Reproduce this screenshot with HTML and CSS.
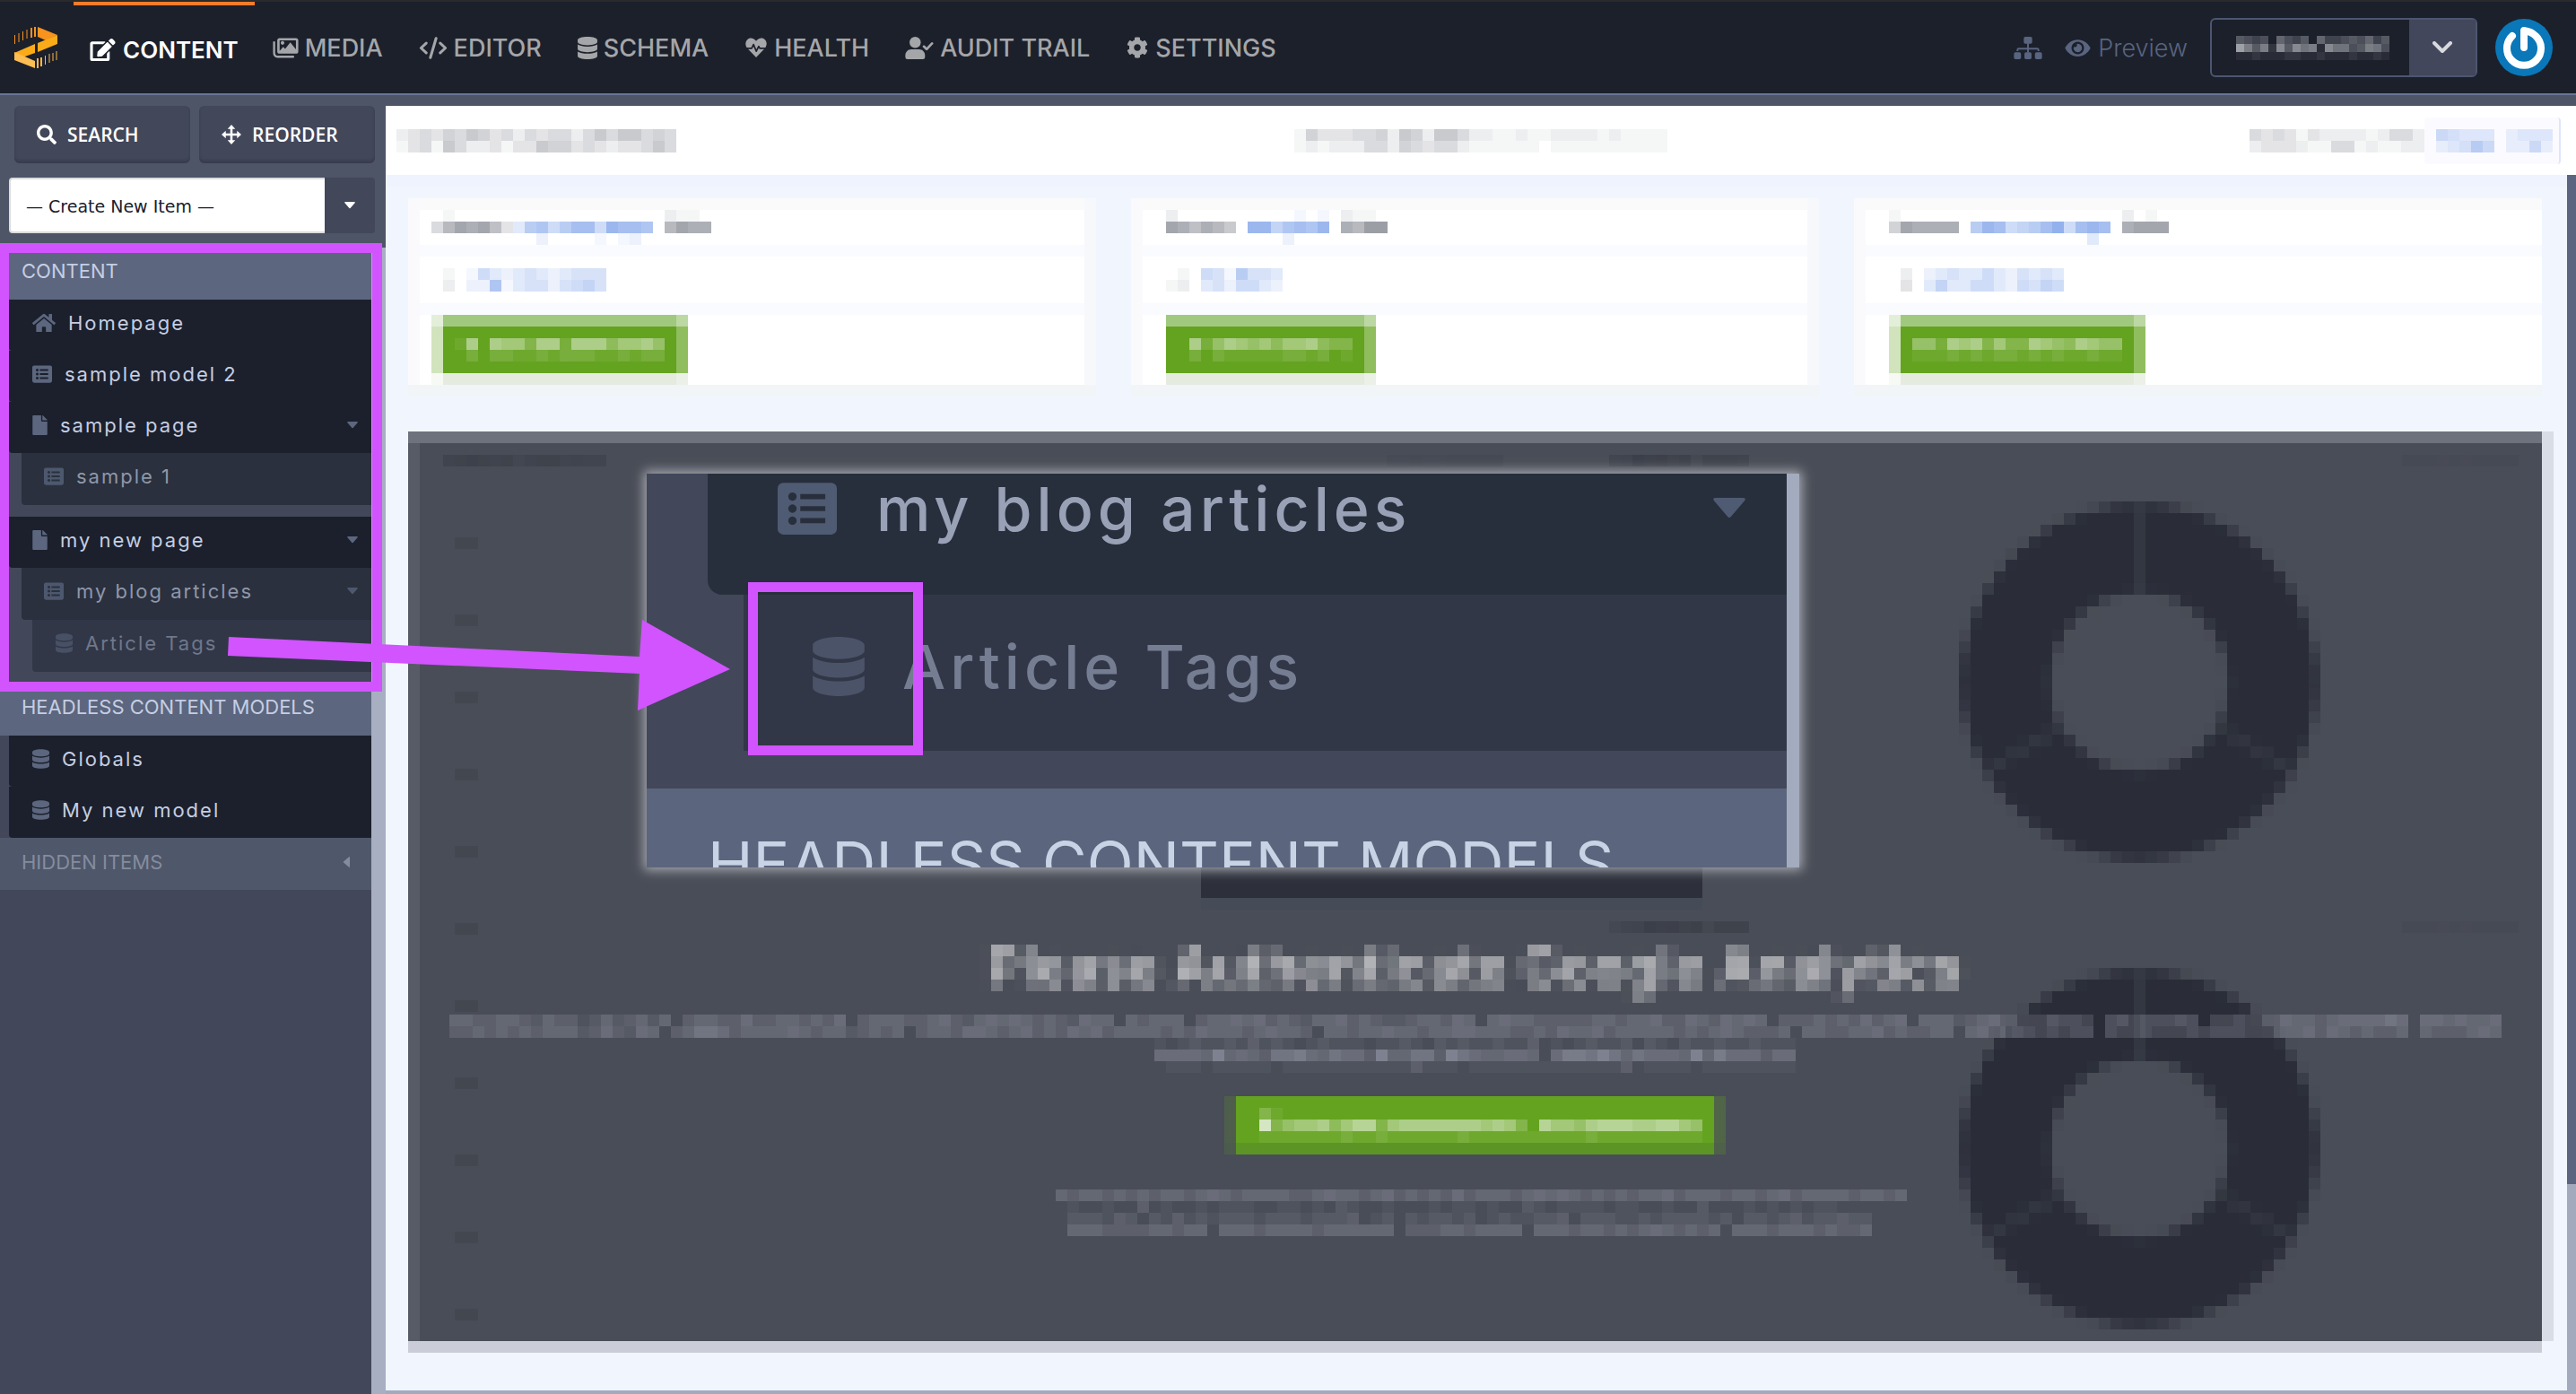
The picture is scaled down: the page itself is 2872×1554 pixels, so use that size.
FILE: index.html
```html
<!DOCTYPE html>
<html lang="en">
<head>
<meta charset="utf-8">
<title>Content</title>
<link rel="stylesheet" href="styles.css">
</head>
<body>
<svg class="defs" aria-hidden="true">
  <defs>
    <filter id="pixelate" x="0" y="0" width="100%" height="100%" color-interpolation-filters="sRGB">
      <feGaussianBlur in="SourceGraphic" stdDeviation="3" result="soft"/>
      <feFlood x="6" y="6" width="1" height="1"/>
      <feComposite width="13" height="13"/>
      <feTile result="dots"/>
      <feComposite in="soft" in2="dots" operator="in"/>
      <feMorphology operator="dilate" radius="6"/>
    </filter>
    <symbol id="i-edit" viewBox="0 0 576 512"><path d="M402.6 83.2l90.2 90.2c3.8 3.8 3.8 10 0 13.8L274.4 405.6l-92.8 10.3c-12.4 1.4-22.9-9.1-21.5-21.5l10.3-92.8L388.8 83.2c3.8-3.8 10-3.8 13.8 0zm162-22.9l-48.8-48.8c-15.2-15.2-39.9-15.2-55.2 0l-35.4 35.4c-3.8 3.8-3.8 10 0 13.8l90.2 90.2c3.8 3.8 10 3.8 13.8 0l35.4-35.4c15.2-15.3 15.2-40 0-55.2zM384 346.2V448H64V128h229.8c3.2 0 6.2-1.3 8.5-3.5l40-40c7.6-7.6 2.2-20.5-8.5-20.5H48C21.5 64 0 85.5 0 112v352c0 26.5 21.5 48 48 48h352c26.5 0 48-21.5 48-48V306.2c0-10.7-12.9-16-20.5-8.5l-40 40c-2.2 2.3-3.5 5.3-3.5 8.5z"/></symbol>
    <symbol id="i-media" viewBox="0 0 576 512"><path fill-rule="evenodd" d="M150 32h372a54 54 0 0 1 54 54v246a54 54 0 0 1-54 54H150a54 54 0 0 1-54-54V86a54 54 0 0 1 54-54zm0 48v240l82-92 44 48 118-150 128 160V80H150zm66 18a42 42 0 1 0 .1 0z"/><path d="M24 100a24 24 0 0 1 24 24v244a64 64 0 0 0 64 64h348a24 24 0 0 1 0 48H100A100 100 0 0 1 0 380V124a24 24 0 0 1 24-24z"/></symbol>
    <symbol id="i-code" viewBox="0 0 640 512"><path fill="none" stroke="currentColor" stroke-width="62" stroke-linecap="round" stroke-linejoin="round" d="M160 145L42 256l118 111M480 145l118 111-118 111M385 35L255 477"/></symbol>
    <symbol id="i-db" viewBox="0 0 448 512"><path d="M448 73.143v45.714C448 159.143 347.667 192 224 192S0 159.143 0 118.857V73.143C0 32.857 100.333 0 224 0s224 32.857 224 73.143zM448 176v102.857C448 319.143 347.667 352 224 352S0 319.143 0 278.857V176c48.125 33.143 136.208 48.572 224 48.572S399.874 209.143 448 176zm0 160v102.857C448 479.143 347.667 512 224 512S0 479.143 0 438.857V336c48.125 33.143 136.208 48.572 224 48.572S399.874 369.143 448 336z"/></symbol>
    <symbol id="i-heart" viewBox="0 0 512 512"><path d="M256 488L60 286C-10 212-8 112 52 62c60-50 140-36 190 24l14 16 14-16c50-60 130-74 190-24 60 50 62 150-8 224z"/><path fill="none" stroke="#1c202b" stroke-width="36" stroke-linejoin="round" d="M10 276h140l44-92 66 160 58-116 26 48h160"/></symbol>
    <symbol id="i-user" viewBox="0 0 640 512"><circle cx="224" cy="128" r="128"/><path d="M134 288h180c74 0 134 60 134 134v42a48 48 0 0 1-48 48H48a48 48 0 0 1-48-48v-42c0-74 60-134 134-134z"/><path fill="none" stroke="currentColor" stroke-width="56" stroke-linecap="round" stroke-linejoin="round" d="M424 222l62 62 124-132"/></symbol>
    <symbol id="i-cog" viewBox="0 0 512 512"><path d="M487.4 315.7l-42.6-24.6c4.3-23.2 4.3-47 0-70.2l42.6-24.6c4.9-2.8 7.1-8.6 5.5-14-11.1-35.6-30-67.8-54.7-94.6-3.8-4.1-10-5.1-14.8-2.3L380.8 110c-17.9-15.4-38.5-27.3-60.8-35.1V25.8c0-5.6-3.9-10.5-9.4-11.7-36.7-8.2-74.3-7.8-109.2 0-5.5 1.2-9.4 6.1-9.4 11.7V75c-22.2 7.9-42.8 19.8-60.8 35.1L88.7 85.5c-4.9-2.8-11-1.9-14.8 2.3-24.7 26.7-43.6 58.9-54.7 94.6-1.7 5.4.6 11.2 5.5 14L67.3 221c-4.3 23.2-4.3 47 0 70.2l-42.6 24.6c-4.9 2.8-7.1 8.6-5.5 14 11.1 35.6 30 67.8 54.7 94.6 3.8 4.1 10 5.1 14.8 2.3l42.6-24.6c17.9 15.4 38.5 27.3 60.8 35.1v49.2c0 5.6 3.9 10.5 9.4 11.7 36.7 8.2 74.3 7.8 109.2 0 5.5-1.2 9.4-6.1 9.4-11.7v-49.2c22.2-7.9 42.8-19.8 60.8-35.1l42.6 24.6c4.9 2.8 11 1.9 14.8-2.3 24.7-26.7 43.6-58.9 54.7-94.6 1.5-5.5-.7-11.3-5.6-14.1zM256 336c-44.1 0-80-35.9-80-80s35.9-80 80-80 80 35.9 80 80-35.9 80-80 80z"/></symbol>
    <symbol id="i-sitemap" viewBox="0 0 640 512"><rect x="224" y="0" width="192" height="160" rx="36"/><rect x="0" y="352" width="160" height="160" rx="36"/><rect x="240" y="352" width="160" height="160" rx="36"/><rect x="480" y="352" width="160" height="160" rx="36"/><path fill="none" stroke="currentColor" stroke-width="40" d="M320 150v210M80 330v-30q0-28 28-28h424q28 0 28 28v30"/></symbol>
    <symbol id="i-eye" viewBox="0 0 576 512"><path fill-rule="evenodd" d="M288 64c130 0 228 80 284 178q6 14 0 28c-56 98-154 178-284 178S60 368 4 270q-6-14 0-28C60 144 158 64 288 64zm0 48a144 144 0 1 0 .1 0z"/><path d="M288 160a96 96 0 1 1-92 70c50 22 92-20 70-66q10-4 22-4z"/></symbol>
    <symbol id="i-search" viewBox="0 0 512 512"><path d="M505 442.7L405.3 343c-4.5-4.5-10.6-7-17-7H372c27.6-35.3 44-79.7 44-128C416 93.1 322.9 0 208 0S0 93.1 0 208s93.1 208 208 208c48.3 0 92.7-16.4 128-44v16.3c0 6.4 2.5 12.5 7 17l99.7 99.7c9.4 9.4 24.6 9.4 33.9 0l28.3-28.3c9.4-9.4 9.4-24.6.1-34zM208 336c-70.7 0-128-57.2-128-128 0-70.7 57.2-128 128-128 70.7 0 128 57.2 128 128 0 70.7-57.2 128-128 128z"/></symbol>
    <symbol id="i-move" viewBox="0 0 512 512"><path d="M256 0l100 110h-70v116h116v-70l110 100-110 100v-70H286v116h70L256 512 156 402h70V286H110v70L0 256l110-100v70h116V110h-70z"/></symbol>
    <symbol id="i-home" viewBox="0 0 576 512"><path d="M280.37 148.26L96 300.11V464a16 16 0 0 0 16 16l112.06-.29a16 16 0 0 0 15.92-16V368a16 16 0 0 1 16-16h64a16 16 0 0 1 16 16v95.64a16 16 0 0 0 16 16.05L464 480a16 16 0 0 0 16-16V300L295.67 148.26a12.19 12.19 0 0 0-15.3 0zM571.6 251.47L488 182.56V44.05a12 12 0 0 0-12-12h-56a12 12 0 0 0-12 12v72.61L318.47 43a48 48 0 0 0-61 0L4.34 251.47a12 12 0 0 0-1.6 16.9l25.5 31A12 12 0 0 0 45.15 301l235.22-193.74a12.19 12.19 0 0 1 15.3 0L530.9 301a12 12 0 0 0 16.9-1.6l25.5-31a12 12 0 0 0-1.7-16.93z"/></symbol>
    <symbol id="i-list" viewBox="0 0 512 512"><path fill-rule="evenodd" d="M48 32h416a48 48 0 0 1 48 48v352a48 48 0 0 1-48 48H48a48 48 0 0 1-48-48V80a48 48 0 0 1 48-48zm80 84a36 36 0 1 0 .1 0zm0 104a36 36 0 1 0 .1 0zm0 104a36 36 0 1 0 .1 0zM196 130v44h216v-44zm0 104v44h216v-44zm0 104v44h216v-44z"/></symbol>
    <symbol id="i-file" viewBox="0 0 384 512"><path d="M24 0h200v136a24 24 0 0 0 24 24h136v328a24 24 0 0 1-24 24H24a24 24 0 0 1-24-24V24A24 24 0 0 1 24 0zM256 0q10 0 17 7l104 104q7 7 7 17H256z"/></symbol>
    <symbol id="i-down" viewBox="0 0 12 8"><path d="M1 0h10q1.500 0 .6 1.200L6.600 7q-.6.700-1.200 0L.4 1.200Q-.5 0 1 0z"/></symbol>
    <symbol id="i-left" viewBox="0 0 8 12"><path d="M8 1v10q0 1.500-1.200.6L1 6.600q-.7-.6 0-1.200L6.800.4Q8-.5 8 1z"/></symbol>
    <symbol id="i-chevron" viewBox="0 0 22 14"><path fill="none" stroke="currentColor" stroke-width="4" stroke-linecap="round" stroke-linejoin="round" d="M2 2l9 9 9-9"/></symbol>
  </defs>
</svg>

<header class="topbar">
  <a class="brand" href="#" aria-label="Home">
    <svg viewBox="0 0 48 46">
      <path fill="#f7931e" d="M26 0l22 9-13 6-9-4z"/>
      <path fill="#fbab18" d="M48 9v10L26 28V18zM23 19v10L9 34 0 29z"/>
      <path fill="#fbbd54" d="M0 28l23 10v8L0 37z"/>
      <path stroke="#f7931e" d="M.5 9v10M5 7v10M9.500 5v10M14 3v10" stroke-width="1"/>
      <path stroke="#f7931e" stroke-width="2" d="M19 1v11M23 0v11"/>
      <path stroke="#fbb84a" stroke-width="2" d="M26 35v11M30 34v10"/>
      <path stroke="#fbb84a" stroke-width="1" d="M34.500 32v10M39 30v10M43 29v9M47 27v10"/>
    </svg>
  </a>
  <nav class="nav">
    <a class="nav-item is-active" href="#"><svg class="ic w29"><use href="#i-edit"/></svg>CONTENT</a>
    <a class="nav-item" href="#"><svg class="ic w29"><use href="#i-media"/></svg>MEDIA</a>
    <a class="nav-item" href="#"><svg class="ic w32"><use href="#i-code"/></svg>EDITOR</a>
    <a class="nav-item" href="#"><svg class="ic w22"><use href="#i-db"/></svg>SCHEMA</a>
    <a class="nav-item" href="#"><svg class="ic w26"><use href="#i-heart"/></svg>HEALTH</a>
    <a class="nav-item" href="#"><svg class="ic w32"><use href="#i-user"/></svg>AUDIT TRAIL</a>
    <a class="nav-item" href="#"><svg class="ic w26"><use href="#i-cog"/></svg>SETTINGS</a>
  </nav>
  <div class="tools">
    <a class="tool" href="#" aria-label="Site map"><svg class="ic w32"><use href="#i-sitemap"/></svg></a>
    <a class="tool" href="#"><svg class="ic w29"><use href="#i-eye"/></svg>Preview</a>
    <div class="site">
      <span class="mosaic" data-cell="9" data-rows="5434064350633454635|b858295978197745874|1121112211211121121"></span>
      <button class="site-more" type="button" aria-label="Switch site"><svg class="ic w22"><use href="#i-chevron"/></svg></button>
    </div>
    <a class="avatar" href="#" aria-label="Account">
      <svg viewBox="0 0 64 64"><circle cx="32" cy="32" r="32" fill="#0a77b9"/><path fill="none" stroke="#fff" stroke-width="8" stroke-linecap="round" stroke-linejoin="round" d="M19 19A19 19 0 1 0 45 19q-5-5-13-6v19"/></svg>
    </a>
  </div>
</header>

<div class="shell">
  <aside class="side">
    <div class="side-tools">
      <div class="side-actions">
        <button class="action" type="button"><svg class="ic w22"><use href="#i-search"/></svg>SEARCH</button>
        <button class="action" type="button"><svg class="ic w22"><use href="#i-move"/></svg>REORDER</button>
      </div>
      <label class="create">
        <select aria-label="Create New Item"><option>— Create New Item —</option></select>
        <span class="create-caret"><svg class="ic w12"><use href="#i-down"/></svg></span>
      </label>
    </div>
    <div class="tree">
      <h2 class="group">CONTENT</h2>
      <ul class="items">
        <li><a class="row" href="#"><svg class="ic w26"><use href="#i-home"/></svg>Homepage</a></li>
        <li><a class="row" href="#"><svg class="ic w22"><use href="#i-list"/></svg>sample model 2</a></li>
        <li><a class="row" href="#"><svg class="ic w17"><use href="#i-file"/></svg>sample page<svg class="ic w12 caret"><use href="#i-down"/></svg></a>
          <ul class="items nested">
            <li><a class="row row-2" href="#"><svg class="ic w22"><use href="#i-list"/></svg>sample 1</a></li>
          </ul>
        </li>
        <li><a class="row" href="#"><svg class="ic w17"><use href="#i-file"/></svg>my new page<svg class="ic w12 caret"><use href="#i-down"/></svg></a>
          <ul class="items nested">
            <li><a class="row row-2" href="#"><svg class="ic w22"><use href="#i-list"/></svg>my blog articles<svg class="ic w12 caret"><use href="#i-down"/></svg></a></li>
            <li><a class="row row-3" href="#"><svg class="ic w19"><use href="#i-db"/></svg>Article Tags</a></li>
          </ul>
        </li>
      </ul>
      <h2 class="group">HEADLESS CONTENT MODELS</h2>
      <ul class="items">
        <li><a class="row" href="#"><svg class="ic w19"><use href="#i-db"/></svg>Globals</a></li>
        <li><a class="row" href="#"><svg class="ic w19"><use href="#i-db"/></svg>My new model</a></li>
      </ul>
      <h2 class="group is-hidden">HIDDEN ITEMS<svg class="ic w8"><use href="#i-left"/></svg></h2>
    </div>
  </aside>

  <main class="main">
    <div class="subbar">
      <span class="mosaic ink" data-rows="234354653424344246466454|134164223133655343233464"></span>
      <span class="mosaic ink subbar-mid" data-rows="15333445265266422112112222121111|12122244254344211111101111111111"></span>
      <span class="subbar-end">
        <span class="mosaic ink" data-rows="434313222212442|233321144121122"></span>
        <span class="subbar-links"><span class="mosaic sky" data-rows="54333.2333|23475.2252"></span></span>
      </span>
    </div>

    <div class="page">
      <section class="cards">
        <article class="card">
          <div class="card-title"><span class="mosaic ink" data-rows=".1.....|48a9a73|......."></span><span class="mosaic sky" data-rows="............|37857995a998|..2....1.12."></span><span class="mosaic ink gap" data-rows="211.|8a99|...."></span></div>
          <div class="card-line"><span class="mosaic ink" data-rows="1.|2."></span><span class="mosaic sky" data-rows="153234323444|228134424564"></span></div>
          <button class="cta cta-l" type="button" aria-label="Open report 1"><span class="mosaic" data-rows="17.766377277746675|.2.221121222112122"></span></button>
        </article>
        <article class="card">
          <div class="card-title"><span class="mosaic ink" data-rows="2.....|a97986|......"></span><span class="mosaic sky gap" data-rows="....1.1|aa6898a|...2..."></span><span class="mosaic ink gap" data-rows="211.|98bb|...."></span></div>
          <div class="card-line"><span class="mosaic ink" data-rows=".1|12"></span><span class="mosaic sky gap" data-rows="5417443|3425532"></span></div>
          <button class="cta cta-m" type="button" aria-label="Open report 2"><span class="mosaic" data-rows="72576564667433|2.2111112212.1"></span></button>
        </article>
        <article class="card">
          <div class="card-title"><span class="mosaic ink" data-rows="1.....|5a9999|......"></span><span class="mosaic sky gap" data-rows="............|7a95679b59a9|..........3."></span><span class="mosaic ink gap" data-rows="2.1.|9aaa|...."></span></div>
          <div class="card-line"><span class="mosaic ink" data-rows=".2|.3"></span><span class="mosaic sky gap" data-rows="234335324343|363355325465"></span></div>
          <button class="cta cta-l" type="button" aria-label="Open report 3"><span class="mosaic" data-rows="552767363376547655|111212122121211211"></span></button>
        </article>
      </section>

      <section class="panel">
        <div class="charts" aria-hidden="true">
          <div class="ticks"><i></i><i></i><i></i><i></i><i></i><i></i><i></i><i></i><i></i><i></i><i></i></div>
          <div class="chart-head">
            <span class="mosaic shade" data-rows="78987857886766"></span>
            <span class="mosaic shade" data-rows="2232233333"></span>
          </div>
          <div class="chart">
            <div class="chart-head">
              <span class="mosaic shade" data-rows="67b9a8948887"></span>
              <span class="mosaic shade" data-rows="2221212222"></span>
            </div>
            <svg class="donut" viewBox="0 0 403 403"><circle cx="201" cy="201" r="149" fill="none" stroke="#2a2d38" stroke-width="98"/><path stroke="#343842" stroke-width="10" d="M201 2v98M113 252l-84 49M289 252l84 49"/></svg>
            <div class="chart-head chart-head-low">
              <span class="mosaic shade" data-rows="467b9a894888"></span>
              <span class="mosaic shade" data-rows="2221212222"></span>
            </div>
            <svg class="donut" viewBox="0 0 403 403"><circle cx="201" cy="201" r="149" fill="none" stroke="#2a2d38" stroke-width="98"/><path stroke="#343842" stroke-width="10" d="M201 2v98M113 252l-84 49M289 252l84 49"/></svg>
          </div>
        </div>
        <div class="notice">
          <div class="plate"></div>
          <h1>Please Authenticate Google Analytics</h1>
          <span class="mosaic lilac" data-rows="4433443243312423424.34433533443435.3444334532454543432544.43444.344545343244534322344354.454433333443445335435454.33343435345.444234533335443.45344454.33433354434555565.5545445|334343434442353254.34665344445434423434.3443554345343545344443435444345443.4434454434455444334354453444443434543334.4433445343344.45345434344.43343334344433344535434334.4333454"></span>
          <span class="mosaic lilac" data-rows="1.1211213121.12111.1121.212112113.1.12112.21.2112112111|555548454366754655384466386544554.577686465554847555355|.111.11111.111111111113111.11111111111113.1111.11111111"></span>
          <button class="cta cta-xl" type="button" aria-label="Continue"><span class="mosaic" data-rows="31....................................|b3566746883677777776763.86657888778865|11111112112111111211111111112111111111"></span></button>
          <span class="mosaic lilac" data-rows="..4344343434434543444433454434534343534443454543434344534443443453444434434.|...1..1..3.1..1.111..11.1.21..1...1.11.1..21.1111.11..1..2...1.1.1.11.|...222132.213121222122212223.12.212212.1211223.2221121222212.22123122322..|...444333344344.444344443444444.3334434444.4443443434543434.444344434334..."></span>
        </div>
        <figure class="zoom">
          <div class="z-row z-row-2"><svg class="ic w66"><use href="#i-list"/></svg>my blog articles<svg class="ic w38 z-caret"><use href="#i-down"/></svg></div>
          <div class="z-row z-row-3"><svg class="ic w58"><use href="#i-db"/></svg>Article Tags<span class="z-mark"></span></div>
          <div class="z-group">HEADLESS CONTENT MODELS</div>
        </figure>
      </section>
    </div>
  </main>
</div>
<div class="outline" aria-hidden="true"></div>
<svg class="arrow" viewBox="0 0 560 102" aria-hidden="true"><path fill="#d154ff" d="M1 19l458 22 3-41 98 55-103 46 2-41L0 40z"/></svg>
<script src="script.js"></script>
</body>
</html>
```
FILE: styles.css
```css
* { box-sizing: border-box; }
body { margin: 0; min-height: 100vh; display: flex; flex-direction: column; font-family: Inter, "Open Sans", sans-serif; background: #42475a; position: relative; }
a { color: inherit; text-decoration: none; }
button { font: inherit; border: 0; padding: 0; cursor: pointer; }
ul { list-style: none; margin: 0; padding: 0; }
.defs { position: absolute; width: 0; height: 0; }
.mosaic { display: block; flex: none; }
.mosaic svg { display: block; }

.ic { flex: none; display: block; fill: currentColor; }
.w8 { width: 8px; height: 12px; }
.w12 { width: 12px; height: 8px; }
.w17 { width: 17px; height: 22px; }
.w19 { width: 19px; height: 22px; }
.w22 { width: 22px; height: 22px; }
.w26 { width: 26px; height: 24px; }
.w29 { width: 29px; height: 25px; }
.w32 { width: 32px; height: 25px; }
.w38 { width: 38px; height: 24px; }
.w58 { width: 58px; height: 66px; }
.w66 { width: 66px; height: 66px; }

/* top bar */
.topbar { height: 106px; display: flex; background: #1c202b; border-top: 2px solid #2a2a2a; border-bottom: 2px solid #6a7595; padding: 0 26px 0 16px; }
.brand { display: flex; align-items: center; width: 66px; }
.brand svg { width: 48px; height: 46px; }
.nav { display: flex; }
.nav-item { display: flex; align-items: center; gap: 7px; padding: 0 20px; font-size: 27px; font-weight: 500; color: #a5a6a9; }
.nav .w22 { height: 25px; }
.nav-item.is-active { padding: 0 18px; gap: 8px; color: #fff; font-size: 26px; font-weight: 600; border-top: 4px solid #f47b2a; }
.tools { margin-left: auto; display: flex; align-items: center; gap: 25px; color: #59647f; font-size: 27px; font-weight: 300; }
.tool { display: flex; align-items: center; gap: 8px; }
.site { display: flex; align-items: center; justify-content: space-between; width: 298px; height: 66px; border: 2px solid #4d5670; border-radius: 6px; padding-left: 27px; color: #cfd0d6; }
.site-more { align-self: stretch; width: 74px; display: flex; align-items: center; justify-content: center; background: #42475b; color: #d8d9de; }
.site-more .ic { height: 14px; }
.avatar { margin-left: -5px; }
.avatar svg { display: block; width: 64px; height: 64px; }

.shell { flex: 1; display: flex; background: #4d5567; }

/* sidebar */
.side { width: 430px; flex: none; display: flex; flex-direction: column; }
.side-tools { height: 170px; padding: 12px 12px 0 10px; display: flex; flex-direction: column; gap: 16px; }
.side-actions { display: grid; grid-template-columns: 1fr 1fr; gap: 10px; padding-left: 6px; }
.action { height: 64px; display: flex; align-items: center; gap: 12px; padding-left: 25px; background: #42475a; color: #fff; border-radius: 6px; font-family: "Open Sans", sans-serif; font-size: 21px; font-weight: 600; box-shadow: inset 0 -3px 3px #383d4e; }
.create { display: flex; height: 62px; }
.create select { appearance: none; flex: 1; min-width: 0; border: 2px solid #dcdcdc; border-right: 0; border-radius: 4px 0 0 4px; background: #fff; color: #1b202c; font-family: "DejaVu Sans", sans-serif; font-size: 19px; padding: 2px 17px 0; }
.create-caret { width: 56px; display: flex; align-items: center; justify-content: center; background: #42475a; color: #fff; border-radius: 0 4px 4px 0; }
.tree { flex: 1; background: #42475a; border-right: 16px solid #a9afc2; }
.group { margin: 0; height: 58px; display: flex; align-items: center; justify-content: space-between; padding: 0 24px 6px; background: #5c667e; color: #c5cee3; font-size: 22px; font-weight: 400; }
.group.is-hidden { background: #4f576a; color: #848c9e; padding-bottom: 4px; }
.row { display: flex; align-items: center; gap: 14px; height: 57px; margin-left: 10px; padding: 0 15px 6px 26px; background: #1b202c; color: #c5cee3; font-size: 22px; letter-spacing: 2px; border-radius: 0 0 0 4px; }
.row .ic { color: #5c667e; }
.row .caret { margin-left: auto; }
.nested { padding-bottom: 13px; }
.row-2, .row-3 { height: 58px; }
.row-2 { margin-left: 24px; padding-left: 25px; background: #2a303d; color: #8e97ab; }
.row-2 .ic { color: #4d586e; }
.row-3 { margin-left: 36px; background: #313747; color: #6f778b; }
.row-3 .ic { color: #485065; }

/* main column */
.main { flex: 1; min-width: 0; margin-top: 12px; display: flex; flex-direction: column; background: #fff; border-bottom: 4px solid #a3aabd; }
.subbar { height: 77px; display: flex; align-items: center; justify-content: space-between; padding: 0 17px 0 12px; }
.subbar-mid { margin-left: 40px; }
.subbar-end { display: flex; align-items: center; }
.subbar-links { padding: 13px 7px 13px 13px; background: #fbfbff; border-right: 2px solid #dfe6fb; border-radius: 4px; }
.ink { color: #777a85; }
.sky { color: #6a94e6; }
.gap { margin-left: 13px; }

.page { flex: 1; display: flex; flex-direction: column; padding: 26px 38px 55px 25px; background: linear-gradient(#eff3fd 13px, #f1f6fe 13px); position: relative; }
/* scroll track with its thumb */
.page::after { content: ""; position: absolute; top: 0; right: 0; bottom: 0; width: 10px; background: linear-gradient(#5b6580 83%, #a3aabd 83%); }
.cards { display: grid; grid-template-columns: repeat(3, 1fr); gap: 39px; }
.card { background: linear-gradient(#fafafa 13px, #fff 13px 52px, #fafbff 52px 65px, #fff 65px 117px, #fafbff 117px 130px, #fff 130px); border-left: 13px solid #fafafc; border-right: 13px solid #f6f8fb; box-shadow: 0 13px #f1f5f8; padding: 13px 13px 0; }
.card + .card { padding-left: 26px; }
.card:last-child { border-right-width: 0; }
.card-title { display: flex; height: 65px; }
.card-line { display: flex; height: 52px; padding-left: 13px; }
.card + .card .card-line { padding-left: 0; }
.cta { display: block; height: 78px; padding: 26px; color: #fff; text-align: left; background: linear-gradient(to right, #ffffffb3 13px, #fff0 13px calc(100% - 13px), #ffffff48 calc(100% - 13px)), linear-gradient(#a1c87f 13px, #64a31f 13px 65px, #e5ebdf 65px); }
.cta-l { width: 286px; }
.cta-m { width: 234px; background: linear-gradient(to right, #fff0 calc(100% - 13px), #ffffff48 calc(100% - 13px)), linear-gradient(#a1c87f 13px, #64a31f 13px 65px, #e5ebdf 65px); }
.cta-xl { width: 559px; height: 65px; padding: 13px 39px; background: linear-gradient(to right, #494d57cc 13px, #494d5700 13px calc(100% - 13px), #494d57b8 calc(100% - 13px)), linear-gradient(#64a31f 52px, #5c9426 52px); }

.panel { flex: 1; min-height: 1014px; margin-top: 52px; position: relative; background: #494d57; box-shadow: inset 0 13px #6e727c, inset 13px 0 #575b66, 13px 0 #d9dde6, 0 13px #cacdd7; }
.charts { position: absolute; inset: 26px 26px 0 39px; display: grid; grid-template-columns: 1182fr 1014fr; column-gap: 118px; }
.ticks { position: absolute; left: 13px; top: 92px; display: grid; gap: 73px; }
.ticks i { display: block; width: 26px; height: 13px; background: #43474f; }
.chart-head { display: flex; justify-content: space-between; height: 52px; }
.chart-head-low { height: 117px; padding-top: 65px; }
.shade { color: #32363f; opacity: .8; }
.donut { display: block; width: 403px; height: 403px; margin-left: 390px; filter: url(#pixelate); }

.notice { position: relative; display: flex; flex-direction: column; align-items: center; padding-top: 455px; }
.plate { width: 559px; height: 78px; margin-right: 52px; background: #2d303b; border-bottom: 13px solid #454b57; }
.notice h1 { align-self: stretch; height: 78px; margin: 39px 0 0; line-height: 50px; text-align: center; font-size: 59px; font-weight: 700; color: #b9babe; filter: url(#pixelate); white-space: nowrap; }
.lilac { color: #aeb0c0; }
.notice .cta { margin: 26px 0 39px; }

.zoom { position: absolute; left: 266px; top: 47px; width: 1285px; height: 439px; margin: 0; overflow: hidden; background: #42475a; border-right: 14px solid #a3abbe; box-shadow: 0 0 12px 3px #a9abb2; font-size: 68px; font-weight: 500; }
.z-row { display: flex; align-items: center; letter-spacing: 5px; }
.z-row-2 { height: 135px; margin-left: 68px; padding: 0 45px 58px 78px; gap: 44px; line-height: 76px; background: #282f3c; color: #98a1b6; border-radius: 0 0 0 16px; }
.z-row-2 .ic { color: #4f5b72; }
.z-row .z-caret { margin-left: auto; }
.z-row-3 { position: relative; height: 174px; margin-left: 108px; padding: 0 0 14px 77px; gap: 42px; background: #313747; color: #757d92; }
.z-row-3 .ic { color: #4b5369; }
.z-mark { position: absolute; left: 5px; top: -14px; width: 195px; height: 193px; border: 11px solid #d154ff; }
.z-group { margin-top: 42px; height: 88px; padding: 42px 0 0 68px; line-height: 82px; background: #5b657d; color: #c9d3e6; white-space: nowrap; font-weight: 400; }

/* callouts drawn over the page */
.outline { position: absolute; left: -1px; top: 271px; width: 427px; height: 500px; border: 11px solid #d154ff; }
.arrow { position: absolute; left: 254px; top: 691px; width: 560px; height: 102px; }
```
FILE: script.js
```js
// Draws each obscured label as a grid of cells: one hex digit per cell gives its strength.
document.querySelectorAll('.mosaic').forEach(function (el) {
  var size = Number(el.dataset.cell || 13);
  var rows = el.dataset.rows.split('|');
  var cols = Math.max.apply(null, rows.map(function (r) { return r.length; }));
  var cells = '';
  rows.forEach(function (row, y) {
    row.split('').forEach(function (ch, x) {
      if (ch === '.' || ch === '0') return;
      cells += '<rect x="' + x * size + '" y="' + y * size + '" width="' + size + '" height="' + size +
        '" fill-opacity="' + (parseInt(ch, 16) / 15).toFixed(2) + '"/>';
    });
  });
  el.innerHTML = '<svg aria-hidden="true" shape-rendering="crispEdges" fill="currentColor" width="' +
    cols * size + '" height="' + rows.length * size + '">' + cells + '</svg>';
});
```
